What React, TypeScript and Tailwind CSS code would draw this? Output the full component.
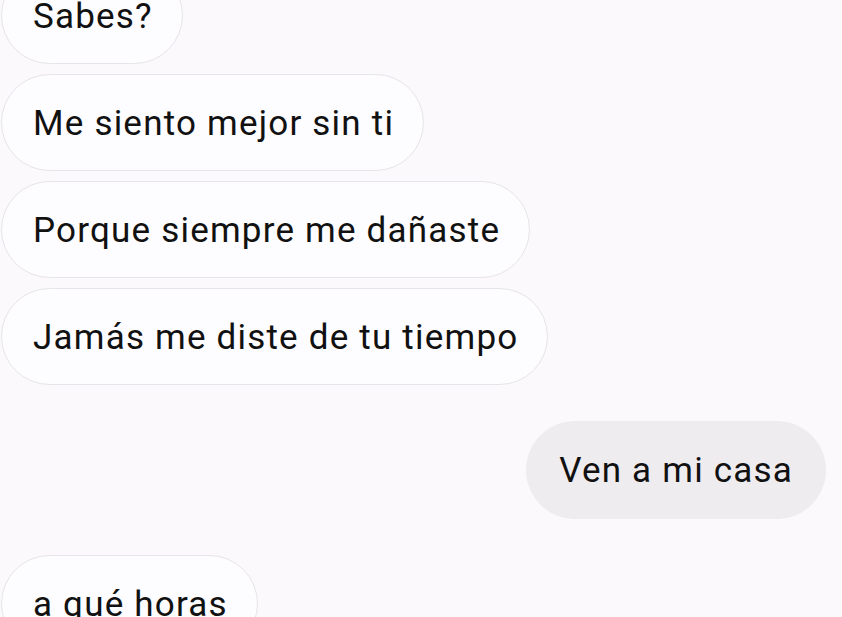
import "react";

type Msg = { text: string; mine?: boolean };

const messages: Msg[] = [
    { text: "Sabes?" },
    { text: "Me siento mejor sin ti" },
    { text: "Porque siempre me dañaste" },
    { text: "Jamás me diste de tu tiempo" },
    { text: "Ven a mi casa", mine: true },
    { text: "a qué horas" },
];

function Bubble({ msg }: { msg: Msg }) {
    if (msg.mine) {
        return (
            <div className="self-end mr-[16px] my-[26px] h-[98px] flex items-center rounded-full bg-[#eeecef] pl-[33px] pr-[33px] pt-[3px] text-[35px] tracking-[1.2px] text-[#111111]">
                {msg.text}
            </div>
        );
    }
    return (
        <div className="self-start ml-[1px] h-[97px] flex items-center rounded-full bg-[#fdfcfe] border-[1.5px] border-[#e6e4e8] pl-[31px] pr-[29px] pt-[3px] text-[35px] tracking-[1.2px] text-[#111111] shrink-0">
            {msg.text}
        </div>
    );
}

export default function App() {
    return (
        <div
            className="w-[842px] h-[617px] overflow-hidden bg-[#fbf9fc]"
            style={{ fontFamily: "Roboto, 'Noto Sans', sans-serif" }}
        >
            <div className="flex flex-col gap-[10px] -mt-[33px]">
                {messages.map((m, i) => (
                    <Bubble key={i} msg={m} />
                ))}
            </div>
        </div>
    );
}
